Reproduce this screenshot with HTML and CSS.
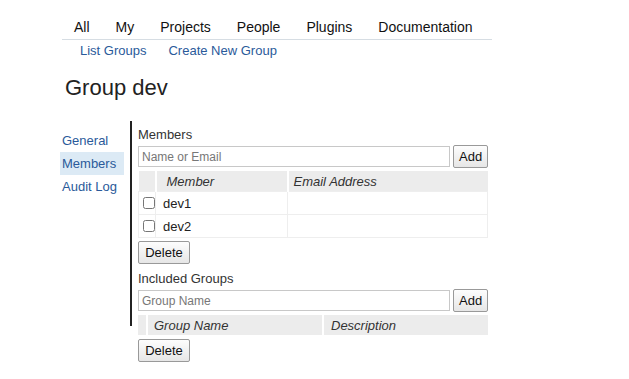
FILE: index.html
```html
<!DOCTYPE html>
<html lang="en">
<head>
    <meta charset="UTF-8">
    <title>Group dev</title>
    <link rel="stylesheet" href="styles.css">
</head>
<body>
    <!-- Top menu -->
    <div class="page">
        <div class="menu">
            <span>All</span>
            <span>My</span>
            <span>Projects</span>
            <span>People</span>
            <span>Plugins</span>
            <span>Documentation</span>
        </div>
        <div class="submenu">
            <a href="#">List Groups</a>
            <a href="#">Create New Group</a>
        </div>

        <div class="title">Group dev</div>

        <div class="layout">
            <!-- Side links -->
            <div class="side">
                <a href="#">General</a>
                <a href="#" class="active">Members</a>
                <a href="#">Audit Log</a>
            </div>
            <div class="divider"></div>

            <div class="main">
                <div class="label">Members</div>
                <div class="add-row">
                    <input type="text" placeholder="Name or Email">
                    <button>Add</button>
                </div>
                <table class="members">
                    <tr>
                        <th class="check"></th>
                        <th class="col-name">Member</th>
                        <th class="col-mail">Email Address</th>
                    </tr>
                    <tr>
                        <td class="check"><input type="checkbox"></td>
                        <td>dev1</td>
                        <td></td>
                    </tr>
                    <tr>
                        <td class="check"><input type="checkbox"></td>
                        <td>dev2</td>
                        <td></td>
                    </tr>
                </table>
                <button class="delete">Delete</button>

                <div class="label second">Included Groups</div>
                <div class="add-row">
                    <input type="text" placeholder="Group Name">
                    <button>Add</button>
                </div>
                <table class="groups">
                    <tr>
                        <th class="check small"></th>
                        <th class="col-group">Group Name</th>
                        <th>Description</th>
                    </tr>
                </table>
                <button class="delete last">Delete</button>
            </div>
        </div>
    </div>
</body>
</html>
```

FILE: styles.css
```css
body {
    margin: 0;
    padding: 0;
    background-color: white;
    color: #222;
    font-family: "Liberation Sans", Arial, sans-serif;
    font-size: 13px;
}

.page {
    padding-left: 62px;
}

/* Top menu */
.menu {
    box-sizing: border-box;
    width: 430px;
    display: flex;
    gap: 26px;
    padding: 17px 0 2px 12px;
    font-size: 14px;
    line-height: 20px;
    color: #111;
    border-bottom: 1px solid #d6dde3;
}

.submenu {
    display: flex;
    gap: 22px;
    padding: 1px 0 0 18px;
    line-height: 20px;
}

.submenu a,
.side a {
    color: #2a5a9a;
    text-decoration: none;
}

.title {
    font-size: 22px;
    color: #222;
    padding: 15px 0 0 3px;
    line-height: 24px;
}

.layout {
    display: flex;
    margin-top: 21px;
}

/* Side links */
.side {
    display: flex;
    flex-direction: column;
    width: 68px;
    padding-top: 8px;
}

.side a {
    padding: 2px 0;
    line-height: 19px;
    width: 62px;
}

.side a.active {
    background-color: #dceaf5;
    margin-left: -2px;
    padding-left: 2px;
}

.divider {
    width: 2px;
    height: 205px;
    background-color: #222;
}

.main {
    padding: 5px 0 0 6px;
    width: 350px;
}

.label {
    line-height: 17px;
    color: #333;
}

.label.second {
    margin-top: 6px;
}

.add-row {
    display: flex;
    align-items: center;
    gap: 3px;
    margin-top: 2px;
}

.add-row input {
    width: 312px;
    height: 21px;
    box-sizing: border-box;
    border: 1px solid #c8c8c8;
    font-family: inherit;
    font-size: 12px;
    padding: 0 3px;
    margin: 0;
}

.add-row input::placeholder {
    color: #777;
}

button {
    font-family: inherit;
    font-size: 13px;
    height: 23px;
    padding: 0 5px;
    border: 1px solid #999;
    border-radius: 2px;
    background: linear-gradient(#fdfdfd, #e6e6e6);
    color: #111;
}

.add-row button {
    width: 35px;
}

table {
    width: 350px;
    border-collapse: collapse;
    margin-top: 3px;
}

th {
    background-color: #ececec;
    font-weight: normal;
    font-style: italic;
    text-align: left;
    height: 20px;
    padding: 0 0 0 7px;
    border-left: 2px solid white;
    color: #333;
}

th:first-child {
    border-left: none;
}

th.col-name {
    width: 120px;
    padding-left: 10px;
}

th.col-mail {
    padding-left: 5px;
}

td {
    height: 22px;
    border: 1px solid #eee;
    padding: 0 0 0 7px;
}

td.check,
th.check {
    width: 12px;
    padding: 0 0 0 4px;
}

td.check input {
    margin: 3px 0 0 0;
    width: 12px;
    height: 12px;
}

th.small {
    width: 4px;
}

th.col-group {
    width: 168px;
    padding-left: 6px;
}

.delete {
    display: block;
    margin-top: 3px;
    width: 52px;
}

.delete.last {
    margin-top: 4px;
}
```
